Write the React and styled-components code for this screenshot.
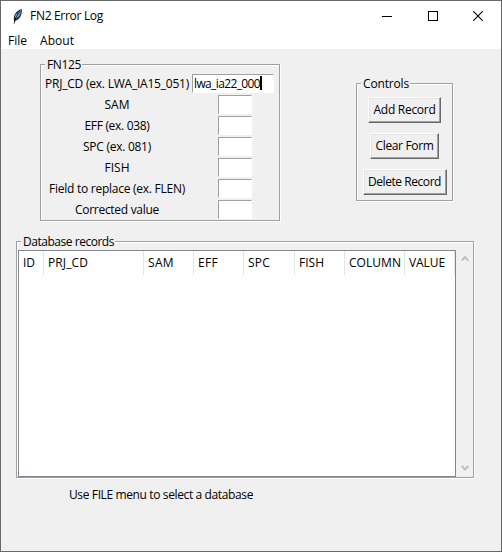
import React, { useLayoutEffect, useRef, useState } from "react";
import styled, { createGlobalStyle } from "styled-components";

const GlobalStyle = createGlobalStyle`
  *, *::before, *::after { box-sizing: border-box; }
  html, body { margin: 0; padding: 0; overflow: hidden; }
  body, button, input { font: 12px/16px "Open Sans", "Noto Sans", sans-serif; color: #000; }
`;

const Window = styled.div`
  width: 502px;
  height: 552px;
  display: flex;
  flex-direction: column;
  background: #f0f0f0;
  border: 1px solid #696969;
`;

const TitleBar = styled.header`
  height: 30px;
  display: flex;
  align-items: center;
  padding-left: 11px;
  background: #fff;
`;

const Title = styled.div`
  flex: 1;
  padding-left: 6px;
  display: flex;
`;

const WindowButtons = styled.div`
  display: flex;
  align-self: stretch;
`;

const WindowButton = styled.div`
  width: 45.5px;
  padding-bottom: 1px;
  display: flex;
  align-items: center;
  justify-content: center;
`;

const MenuBar = styled.nav`
  height: 18px;
  display: flex;
  gap: 13px;
  padding: 2px 0 0 7px;
  background: #fff;
`;

const Body = styled.main`
  flex: 1;
  padding: 15px 0 0 15px;
`;

const TopRow = styled.div`
  height: 177px;
  display: flex;
  align-items: flex-start;
  padding-left: 24px;
`;

const Group = styled.section`
  width: ${(p) => p.$w}px;
  height: ${(p) => p.$h}px;
  margin: ${(p) => p.$m || "0"};
  border: 1px solid #a0a0a0;
  box-shadow: 1px 1px 0 #fff, inset 1px 1px 0 #fff;
`;

const Legend = styled.div`
  width: max-content;
  height: 15px;
  margin: -8px 0 0 4px;
  padding: 0 1px 0 2px;
  background: #f0f0f0;
`;

const Form = styled.div`
  padding-top: 2px;
`;

const FormRow = styled.div`
  height: 19px;
  margin-bottom: 2px;
  display: grid;
  grid-template-columns: 148px 88px;
  align-items: center;
  padding-left: 2px;
`;

const FormLabel = styled.span`
  display: flex;
  justify-content: center;
`;

const Entry = styled.span`
  width: ${(p) => (p.$wide ? 82 : 34)}px;
  height: 19px;
  margin-left: ${(p) => (p.$wide ? 1 : 27)}px;
  padding: 1px 0 0 1px;
  display: flex;
  background: #fff;
  border: 1px solid #fff;
  border-top-color: #a0a0a0;
  border-left-color: #a0a0a0;
`;

const Caret = styled.span`
  width: 2px;
  height: 14px;
  background: #000;
`;

const ButtonStack = styled.div`
  display: flex;
  flex-direction: column;
  align-items: center;
  gap: 10px;
  padding-top: 6px;
`;

const PushButton = styled.button`
  width: ${(p) => p.$w}px;
  height: 26px;
  padding: 0;
  display: flex;
  align-items: center;
  justify-content: center;
  background: #f0f0f0;
  border: 1px solid;
  border-color: #fff #696969 #696969 #fff;
  box-shadow: inset -1px -1px 0 #a0a0a0, inset 1px 1px 0 #e3e3e3;
`;

const RecordsArea = styled.div`
  height: 226px;
  margin: 1px 0 0 1px;
  display: flex;
`;

const Table = styled.div`
  width: 438px;
  height: 227px;
  flex: none;
  background: #fff;
  border: 1px solid #828790;
`;

const HeaderRow = styled.div`
  height: 24px;
  display: flex;
`;

const HeaderCell = styled.div`
  width: ${(p) => p.$w}px;
  height: 24px;
  padding: 4px 0 0 4px;
  border-right: 1px solid #e5e5e5;
`;

const ScrollBar = styled.div`
  width: 17px;
  display: flex;
  flex-direction: column;
  align-items: center;
  justify-content: space-between;
  padding: 5px 0 4px;
`;

const Status = styled.footer`
  margin: 9px 0 0 53px;
`;

const TextRun = styled.span`
  display: block;
  width: ${(p) => p.$w}px;
  white-space: pre;
`;

/* Tracks a line of text so that it spans the given width. */
function Text({ w, children }) {
  const ref = useRef(null);
  const [spacing, setSpacing] = useState(0);
  useLayoutEffect(() => {
    ref.current.style.letterSpacing = "0px";
    const natural = ref.current.getBoundingClientRect().width;
    setSpacing((w - natural) / children.length);
  }, [w, children]);
  return (
    <TextRun $w={w}>
      <span ref={ref} style={{ letterSpacing: spacing }}>{children}</span>
    </TextRun>
  );
}

const Feather = () => (
  <svg width="12" height="16" viewBox="0 0 12 16">
    <path d="M2.2 13.5C0.8 9 2.8 3.4 9.6 1 10.4 4.5 9 10.5 3.8 12.6Z" fill="#14202c" />
    <path d="M4 10.5C3.8 7 5.5 4 9 2 9 5.5 7.4 9.2 4 10.5Z" fill="#63a0dc" />
    <path d="M2.3 15.5C2.7 11 4.8 6.5 8 3.5" fill="none" stroke="#111" strokeWidth="0.9" />
    <path d="M3.2 9.5L4.6 5.7" stroke="#b8d5ef" strokeWidth="0.8" />
  </svg>
);

const Minimize = () => (
  <svg width="10" height="10" shapeRendering="crispEdges"><path d="M0 5.5H10" stroke="#000" /></svg>
);
const Maximize = () => (
  <svg width="10" height="10" shapeRendering="crispEdges"><path d="M.5 .5H9.5V9.5H.5Z" fill="none" stroke="#000" /></svg>
);
const Close = () => (
  <svg width="10" height="10"><path d="M.2 .2L9.8 9.8M9.8 .2L.2 9.8" stroke="#000" strokeWidth="1.1" /></svg>
);
const Arrow = ({ down }) => (
  <svg width="8" height="7" viewBox="0 0 8 7">
    <path d={down ? "M.7 1L4 4.6 7.3 1" : "M.7 5.6L4 2 7.3 5.6"} fill="none" stroke="#bfbfbf" strokeWidth="2" />
  </svg>
);

const fields = [
  { label: "PRJ_CD (ex. LWA_IA15_051)", w: 144, value: "lwa_ia22_000" },
  { label: "SAM", w: 25 },
  { label: "EFF (ex. 038)", w: 65 },
  { label: "SPC (ex. 081)", w: 68 },
  { label: "FISH", w: 25 },
  { label: "Field to replace (ex. FLEN)", w: 136 },
  { label: "Corrected value", w: 84 },
];

const controls = [
  { label: "Add Record", w: 62, box: 73 },
  { label: "Clear Form", w: 58, box: 69 },
  { label: "Delete Record", w: 73, box: 84 },
];

const columns = [
  { label: "ID", w: 12, box: 25 },
  { label: "PRJ_CD", w: 40, box: 100 },
  { label: "SAM", w: 26, box: 50 },
  { label: "EFF", w: 20, box: 50 },
  { label: "SPC", w: 22, box: 51 },
  { label: "FISH", w: 25, box: 50 },
  { label: "COLUMN", w: 52, box: 60 },
  { label: "VALUE", w: 36, box: 50 },
];

export default function App() {
  return (
    <>
      <GlobalStyle />
      <Window>
        <TitleBar>
          <Feather />
          <Title><Text w={73}>FN2 Error Log</Text></Title>
          <WindowButtons>
            <WindowButton><Minimize /></WindowButton>
            <WindowButton><Maximize /></WindowButton>
            <WindowButton><Close /></WindowButton>
          </WindowButtons>
        </TitleBar>
        <MenuBar>
          <Text w={19}>File</Text>
          <Text w={34}>About</Text>
        </MenuBar>
        <Body>
          <TopRow>
            <Group $w={240} $h={157}>
              <Legend><Text w={34}>FN125</Text></Legend>
              <Form>
                {fields.map((f) => (
                  <FormRow key={f.label}>
                    <FormLabel><Text w={f.w}>{f.label}</Text></FormLabel>
                    <Entry $wide={Boolean(f.value)}>
                      {f.value && <><Text w={66}>{f.value}</Text><Caret /></>}
                    </Entry>
                  </FormRow>
                ))}
              </Form>
            </Group>
            <Group $w={97} $h={118} $m="19px 0 0 76px">
              <Legend><Text w={46}>Controls</Text></Legend>
              <ButtonStack>
                {controls.map((c) => (
                  <PushButton key={c.label} $w={c.box}><Text w={c.w}>{c.label}</Text></PushButton>
                ))}
              </ButtonStack>
            </Group>
          </TopRow>
          <Group $w={458} $h={237}>
            <Legend><Text w={91}>Database records</Text></Legend>
            <RecordsArea>
              <Table>
                <HeaderRow>
                  {columns.map((c) => (
                    <HeaderCell key={c.label} $w={c.box}><Text w={c.w}>{c.label}</Text></HeaderCell>
                  ))}
                </HeaderRow>
              </Table>
              <ScrollBar><Arrow /><Arrow down /></ScrollBar>
            </RecordsArea>
          </Group>
          <Status><Text w={184}>Use FILE menu to select a database</Text></Status>
        </Body>
      </Window>
    </>
  );
}
